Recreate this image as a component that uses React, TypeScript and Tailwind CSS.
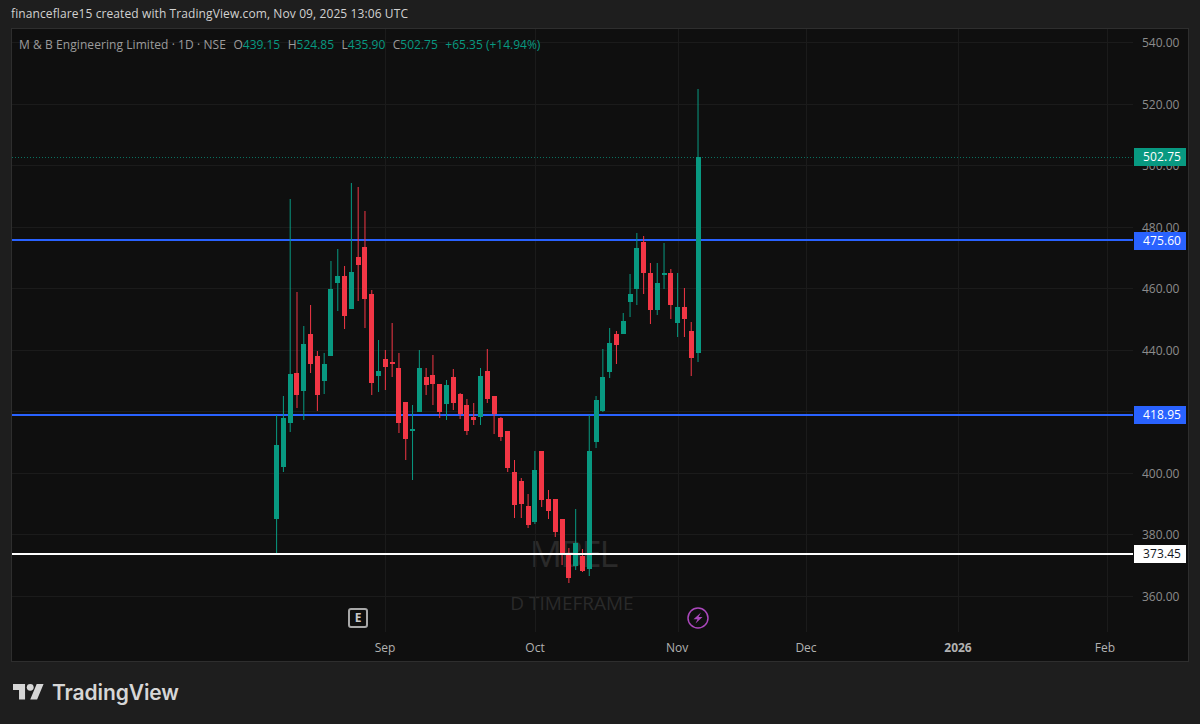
import React from "react";

// wickTop, bodyTop, bodyBottom, wickBottom, up (page pixels)
const candles: [number, number, number, number, number][] = [
  [415, 445, 519, 553, 1], [396, 418, 467, 472, 1], [199, 374, 423, 432, 1], [292, 373, 395, 408, 0],
  [326, 344, 391, 420, 1], [305, 334, 364, 373, 0], [351, 356, 395, 411, 0], [353, 364, 381, 394, 1],
  [261, 289, 356, 356, 1], [249, 276, 283, 311, 1], [266, 276, 316, 329, 0], [183, 272, 309, 309, 1],
  [187, 257, 265, 301, 0], [211, 247, 299, 328, 0], [290, 294, 383, 395, 0], [340, 371, 376, 392, 1],
  [350, 359, 367, 390, 0], [323, 362, 364, 377, 0], [353, 368, 423, 433, 0], [402, 402, 439, 460, 0],
  [405, 429, 431, 480, 1], [350, 368, 412, 412, 1], [368, 377, 385, 395, 0], [355, 375, 384, 405, 0],
  [384, 384, 412, 418, 0], [380, 385, 404, 420, 1], [369, 377, 403, 410, 0], [393, 394, 414, 419, 0],
  [399, 405, 431, 435, 0], [403, 417, 420, 425, 0], [368, 376, 417, 425, 1], [349, 371, 399, 403, 0],
  [396, 396, 414, 434, 0], [417, 418, 437, 441, 0], [431, 431, 468, 472, 0], [460, 472, 505, 518, 0],
  [478, 481, 504, 518, 0], [494, 506, 525, 528, 0], [451, 470, 522, 524, 1], [451, 451, 500, 507, 0],
  [490, 499, 511, 519, 0], [499, 499, 532, 537, 0], [519, 519, 554, 565, 0], [548, 554, 578, 583, 0],
  [509, 543, 566, 570, 1], [549, 556, 571, 572, 0], [415, 451, 569, 576, 1], [396, 400, 442, 448, 1],
  [349, 377, 411, 412, 1], [328, 343, 372, 378, 1], [331, 334, 345, 364, 0], [313, 321, 334, 334, 1],
  [274, 294, 302, 317, 1], [233, 248, 289, 305, 1], [236, 242, 273, 294, 0], [263, 273, 310, 324, 0],
  [263, 283, 310, 315, 1], [243, 273, 275, 289, 1], [269, 273, 305, 319, 0], [273, 307, 323, 337, 1],
  [288, 307, 319, 337, 0], [322, 331, 358, 376, 0], [89, 157, 353, 362, 1],
];

const priceTicks = [540, 520, 500, 480, 460, 440, 400, 380, 360];
const gridPrices = [540, 520, 500, 480, 460, 440, 420, 400, 380, 360];
const gridX = [385.5, 535.5, 678.5, 806.5, 958.5, 1107.5];
const priceY = (p: number) => 42 + (540 - p) * 3.078;

const timeTicks = [
  { label: "Sep", x: 385 },
  { label: "Oct", x: 535 },
  { label: "Nov", x: 677 },
  { label: "Dec", x: 806 },
  { label: "2026", x: 958, bold: true },
  { label: "Feb", x: 1105 },
];

const priceTags = [
  { label: "502.75", top: 119, cls: "bg-[#089981] text-white" },
  { label: "475.60", top: 203, cls: "bg-[#2962ff] text-white" },
  { label: "418.95", top: 377, cls: "bg-[#2962ff] text-white" },
  { label: "373.45", top: 516, cls: "bg-white text-[#131722]" },
];

function Chart() {
  return (
    <svg className="absolute inset-0 h-full w-full" viewBox="12 29 1121 603">
      {gridPrices.map((p) => (
        <line key={p} x1="12" x2="1133" y1={Math.round(priceY(p)) + 0.5} y2={Math.round(priceY(p)) + 0.5} stroke="#1b1b1b" />
      ))}
      {gridX.map((x) => (
        <line key={x} x1={x} x2={x} y1="29" y2="632" stroke="#1b1b1b" />
      ))}
      <line x1="12" x2="1133" y1="157.5" y2="157.5" stroke="#089981" strokeDasharray="1 2" opacity="0.7" />
      <rect x="12" y="239" width="1121" height="2" fill="#2962ff" />
      <rect x="12" y="414" width="1121" height="2" fill="#2962ff" />
      {candles.map(([wt, bt, bb, wb, up], i) => {
        const c = 276.6 + 6.797 * i;
        const fill = up ? "#089981" : "#f23645";
        return (
          <g key={i} fill={fill}>
            <rect x={c - 0.5} y={wt} width="1" height={wb - wt} />
            <rect x={Math.round(c - 2.5)} y={bt} width="5" height={Math.max(bb - bt, 1)} />
          </g>
        );
      })}
      <rect x="12" y="553" width="1121" height="2" fill="#ffffff" />
    </svg>
  );
}

export default function App() {
  return (
    <div className="flex h-[724px] w-[1200px] flex-col overflow-hidden bg-[#1e1e1e] font-['Open_Sans',sans-serif]">
      <div className="flex h-[28px] items-center pl-[11px] text-[12px] tracking-[0.1px] text-[#d1d1d1]">
        financeflare15 created with TradingView.com, Nov 09, 2025 13:06 UTC
      </div>

      <div className="ml-[11px] flex h-[634px] w-[1178px] flex-col border border-[#2e2e2e] bg-[#0f0f0f]">
        <div className="flex flex-1">
          <div className="relative flex-1">
            {/* watermark sits under the candles */}
            <div className="absolute left-[517px] top-[503px] w-[88px] text-center text-[36px] font-medium leading-[44px] tracking-[-2px] text-[#2a2a2a]">MBEL</div>
            <div className="absolute left-[478px] top-[562px] w-[164px] text-center text-[19px] font-medium leading-[24px] text-[#2a2a2a]">D TIMEFRAME</div>
            <Chart />

            <div className="absolute left-[7px] top-[8px] flex items-center gap-[7.5px] text-[12px] leading-4 text-[#9c9c9c]">
              <span className="tracking-[0.07px]">M &amp; B Engineering Limited · 1D · NSE</span>
              <span>O<span className="text-[#089981]">439.15</span></span>
              <span>H<span className="text-[#089981]">524.85</span></span>
              <span>L<span className="text-[#089981]">435.90</span></span>
              <span>C<span className="text-[#089981]">502.75</span></span>
              <span className="text-[#089981]">+65.35 (+14.94%)</span>
            </div>

            <div className="absolute left-[336px] top-[579px] flex h-5 w-5 items-center justify-center rounded-[3px] border-2 border-[#a8a8a8] text-[12px] font-bold text-[#c8c8c8]">E</div>
            <svg className="absolute left-[675px] top-[578px] h-[22px] w-[22px]" viewBox="0 0 22 22" fill="none">
              <circle cx="11" cy="11" r="10" stroke="#ab47bc" strokeWidth="1.5" />
              <path d="M14 5.5 6.5 12.2h4L8.5 16.5l7-6.5h-4z" fill="#ab47bc" />
            </svg>
          </div>

          <div className="relative w-[55px] text-[12px] leading-4 text-[#8c8c8c]">
            {priceTicks.map((p) => (
              <span key={p} className="absolute left-[9px]" style={{ top: priceY(p) - 36 }}>
                {p.toFixed(2)}
              </span>
            ))}
            {priceTags.map((t) => (
              <div key={t.label} className={`absolute left-px flex h-[18px] w-[52px] items-center pl-[9px] tracking-[0.1px] ${t.cls}`} style={{ top: t.top }}>
                {t.label}
              </div>
            ))}
          </div>
        </div>

        <div className="relative h-[29px] text-[12px] text-[#b2b2b2]">
          {timeTicks.map((t) => (
            <span key={t.label} className={`absolute top-[7px] -translate-x-1/2 ${t.bold ? "font-bold" : ""}`} style={{ left: t.x - 12 }}>
              {t.label}
            </span>
          ))}
        </div>
      </div>

      <div className="flex flex-1 items-center gap-[8px] pb-[1px] pl-[13px] text-[#d6d6d6]">
        <svg className="h-[25px] w-[31px]" viewBox="0 0 36 28" fill="currentColor">
          <path d="M14 22H7V11H0V4h14v18zM28 22h-8l7.5-18h8L28 22z" />
          <circle cx="20" cy="8" r="4" />
        </svg>
        <span className="font-['Inter',sans-serif] text-[21px] font-semibold leading-none tracking-[-0.1px]">TradingView</span>
      </div>
    </div>
  );
}
